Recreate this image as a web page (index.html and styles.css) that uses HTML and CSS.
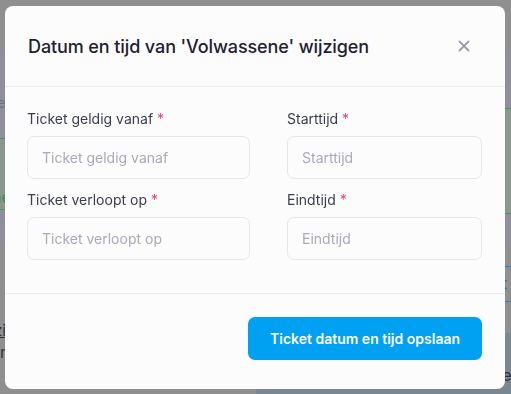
FILE: index.html
```html
<!DOCTYPE html>
<html lang="nl">
<head>
  <meta charset="UTF-8" />
  <meta name="viewport" content="width=device-width, initial-scale=1" />
  <title>Ticket wijzigen</title>
  <link rel="stylesheet" href="styles.css">
</head>
<body>
  <!-- Pagina achter de modal (gedimd) -->
  <div class="page">
    <div class="page-top"></div>
    <div class="page-panel">
      <div class="panel-col">
        <div class="mark"></div>
        <div class="crumb">Tickets</div>
        <div class="green-box left"><span>Volwassene</span></div>
      </div>
      <div class="panel-col">
        <div class="green-box right"></div>
      </div>
    </div>
    <div class="page-bottom">
      <div class="bottom-left">
        <div class="link">Wijzig</div>
        <div class="word">Naam</div>
      </div>
      <div class="bottom-right">
        <div class="tab">Kopen uit</div>
        <div class="strip"><span>Tickets</span></div>
      </div>
    </div>
  </div>

  <!-- Modal -->
  <div class="backdrop">
    <div class="modal">
      <div class="modal-header">
        <h2>Datum en tijd van 'Volwassene' wijzigen</h2>
        <button class="btn-close" aria-label="Sluiten">
          <svg width="12" height="12" viewBox="0 0 12 12"><path d="M1.5 1.5 L10.5 10.5 M10.5 1.5 L1.5 10.5" stroke="#9a9cad" stroke-width="1.8" stroke-linecap="round"/></svg>
        </button>
      </div>

      <div class="modal-body">
        <div class="field">
          <label>Ticket geldig vanaf <span class="req">*</span></label>
          <input type="text" placeholder="Ticket geldig vanaf">
        </div>
        <div class="field">
          <label>Starttijd <span class="req">*</span></label>
          <input type="text" placeholder="Starttijd">
        </div>
        <div class="field">
          <label>Ticket verloopt op <span class="req">*</span></label>
          <input type="text" placeholder="Ticket verloopt op">
        </div>
        <div class="field">
          <label>Eindtijd <span class="req">*</span></label>
          <input type="text" placeholder="Eindtijd">
        </div>
      </div>

      <div class="modal-footer">
        <button class="btn-opslaan">Ticket datum en tijd opslaan</button>
      </div>
    </div>
  </div>
</body>
</html>
```

FILE: styles.css
```css
body {
  margin: 0;
  font-family: Inter, 'Noto Sans', sans-serif;
  background: #8f8f8f;
  overflow: hidden;
}

/* Gedimde pagina achtergrond */
.page {
  height: 394px;
  display: flex;
  flex-direction: column;
}

.page-top {
  height: 50px;
  background: #8f8f8f;
}

.page-panel {
  height: 196px;
  background: #8e8f9a;
  display: grid;
  grid-template-columns: 1fr 1fr;
}

.panel-col {
  display: flex;
  flex-direction: column;
}

.mark {
  width: 3px;
  height: 4px;
  background: #8a5a2a;
  margin: 29px 0 0 10px;
}

.crumb {
  font-size: 13px;
  color: #6f7080;
  margin: 12px 0 0 -28px;
  height: 20px;
}

.green-box {
  background: #8b978e;
  border-top: 1px solid #3e9a5c;
  border-bottom: 1px solid #3e9a5c;
  color: #3e8a55;
  font-size: 16px;
}

.green-box.left {
  height: 72px;
  margin-top: 23px;
  padding-top: 49px;
  box-sizing: border-box;
  overflow: hidden;
  line-height: 19px;
}

.green-box.left span {
  margin-left: -80px;
}

.green-box.right {
  height: 104px;
  margin-top: 58px;
}

.page-bottom {
  flex-grow: 1;
  display: grid;
  grid-template-columns: 1fr 1fr;
}

.bottom-left {
  padding-top: 74px;
  font-size: 16px;
  color: #2e3040;
}

.link {
  margin-left: -30px;
  text-decoration: underline;
}

.word {
  margin-left: -30px;
  margin-top: 2px;
}

.bottom-right {
  display: flex;
  flex-direction: column;
}

.tab {
  margin-top: 20px;
  height: 34px;
  line-height: 34px;
  border-top: 1px solid #1f7ec4;
  border-bottom: 1px solid #1f7ec4;
  color: #1f6aa8;
  font-size: 15px;
  text-align: right;
  padding-right: 4px;
}

.strip {
  margin-top: 31px;
  flex-grow: 1;
  background: #7a8690;
  color: #2e3040;
  font-size: 16px;
  text-align: right;
  padding-top: 32px;
}

.strip span {
  margin-right: -14px;
}

/* Modal */
.backdrop {
  position: fixed;
  top: 0; left: 0; right: 0; bottom: 0;
  display: flex;
  justify-content: flex-start;
  align-items: flex-start;
  padding: 6px 0 0 5px;
}

.modal {
  width: 500px;
  height: 383px;
  background: #fcfcfc;
  border-radius: 8px;
  display: flex;
  flex-direction: column;
  box-sizing: border-box;
}

.modal-header {
  height: 81px;
  padding: 0 34px 0 23px;
  display: flex;
  justify-content: space-between;
  align-items: center;
  border-bottom: 1px solid #ececef;
  box-sizing: border-box;
}

.modal-header h2 {
  margin: 0;
  font-size: 18px;
  font-weight: 500;
  color: #1e2131;
  letter-spacing: -0.1px;
}

.btn-close {
  border: none;
  background: none;
  padding: 0;
  width: 14px;
  height: 14px;
  display: flex;
  align-items: center;
  justify-content: center;
  cursor: pointer;
}

.modal-body {
  height: 207px;
  padding: 22px 23px 0 22px;
  display: grid;
  grid-template-columns: 223px 195px;
  column-gap: 37px;
  row-gap: 11px;
  align-content: start;
  border-bottom: 1px solid #ececef;
  box-sizing: border-box;
}

.field label {
  display: block;
  font-size: 14px;
  color: #3b3d4f;
  line-height: 20px;
  margin-bottom: 7px;
}

.req {
  color: #f43f6a;
}

.field input {
  width: 100%;
  height: 43px;
  box-sizing: border-box;
  border: 1px solid #e5e5ea;
  border-radius: 7px;
  background: #fcfcfc;
  padding: 0 14px;
  font-family: Inter, 'Noto Sans', sans-serif;
  font-size: 14px;
  color: #3b3d4f;
  outline: none;
}

.field input::placeholder {
  color: #a7a9bd;
}

.modal-footer {
  flex-grow: 1;
  display: flex;
  justify-content: flex-end;
  align-items: flex-start;
  padding: 23px 23px 0 0;
}

.btn-opslaan {
  width: 234px;
  height: 43px;
  border: none;
  border-radius: 7px;
  background: #00a0f2;
  color: white;
  font-family: Inter, 'Noto Sans', sans-serif;
  font-weight: 600;
  font-size: 14px;
  cursor: pointer;
}
```
